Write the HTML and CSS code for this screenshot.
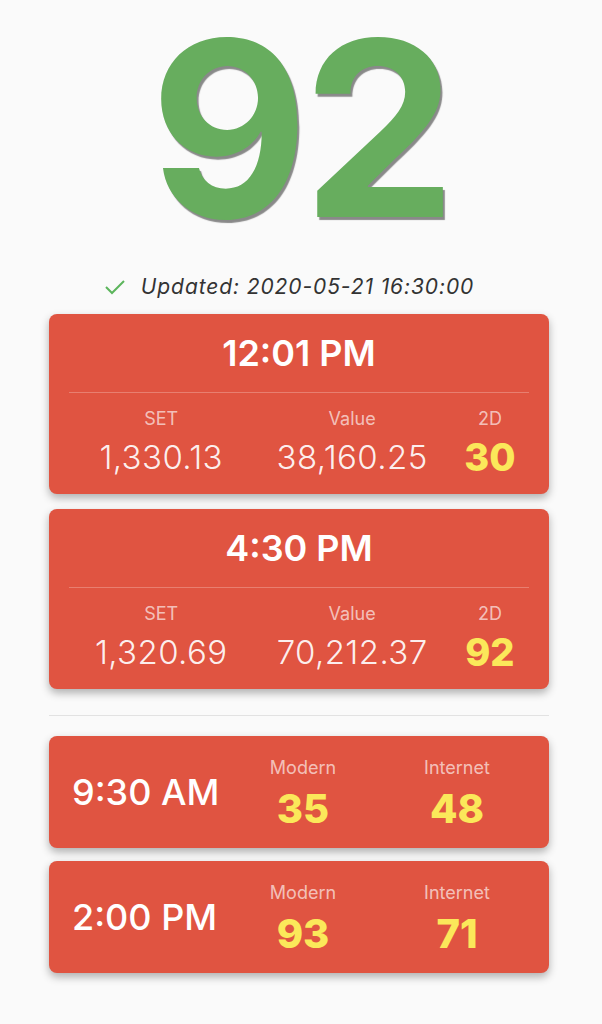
FILE: index.html
```html
<!DOCTYPE html>
<html>
<head>
<meta charset="utf-8">
<link rel="stylesheet" href="styles.css">
</head>
<body>
<main class="page">
  <div class="hero">92</div>
  <div class="updated">
    <svg class="check" width="22" height="18" viewBox="0 0 22 18"><polyline points="2,9 8,15 20,3" fill="none" stroke="#5cb55c" stroke-width="2"/></svg>
    <span class="updated-text">Updated: 2020-05-21 16:30:00</span>
  </div>
  <section class="results">
    <div class="card big">
      <div class="card-title">12:01 PM</div>
      <div class="rule"></div>
      <div class="stats">
        <div class="stat"><div class="label">SET</div><div class="value">1,330.13</div></div>
        <div class="stat"><div class="label">Value</div><div class="value">38,160.25</div></div>
        <div class="stat"><div class="label">2D</div><div class="value hl">30</div></div>
      </div>
    </div>
    <div class="card big">
      <div class="card-title">4:30 PM</div>
      <div class="rule"></div>
      <div class="stats">
        <div class="stat"><div class="label">SET</div><div class="value">1,320.69</div></div>
        <div class="stat"><div class="label">Value</div><div class="value">70,212.37</div></div>
        <div class="stat"><div class="label">2D</div><div class="value hl">92</div></div>
      </div>
    </div>
  </section>
  <div class="separator"></div>
  <section class="results small-list">
    <div class="card small">
      <div class="time">9:30 AM</div>
      <div class="col"><div class="label">Modern</div><div class="num">35</div></div>
      <div class="col"><div class="label">Internet</div><div class="num">48</div></div>
    </div>
    <div class="card small">
      <div class="time">2:00 PM</div>
      <div class="col"><div class="label">Modern</div><div class="num">93</div></div>
      <div class="col"><div class="label">Internet</div><div class="num">71</div></div>
    </div>
  </section>
</main>
</body>
</html>
```
FILE: styles.css
```css
* { box-sizing: border-box; }
html, body { margin: 0; padding: 0; }
body {
  background: #fafafa;
  font-family: Inter, "Noto Sans", sans-serif;
  color: #333;
  width: 602px;
  height: 1024px;
  overflow: hidden;
}
.page { display: flex; flex-direction: column; }
.hero {
  height: 253px;
  padding-top: 7px;
  font-size: 244px;
  line-height: 244px;
  font-weight: 700;
  color: #67ad5e;
  text-align: center;
  letter-spacing: -6px;
  text-indent: -2px;
  text-shadow: 2px 3px 1px rgba(0,0,0,0.45);
}
.updated {
  margin-top: 22px;
  display: flex;
  justify-content: center;
  align-items: center;
  gap: 15px;
  padding-right: 24px;
  height: 24px;
}
.check { display: block; }
.updated-text {
  font-style: italic;
  font-size: 21px;
  line-height: 24px;
  letter-spacing: 0.9px;
  color: #333;
}
.results {
  margin: 15px 0 0 49px;
  width: 500px;
  display: flex;
  flex-direction: column;
  gap: 15px;
}
.card {
  background: #e05441;
  border-radius: 8px;
  box-shadow: 0 4px 8px rgba(0,0,0,0.3);
  color: #fff;
}
.card.big {
  height: 180px;
  padding: 17px 20px 0;
}
.card-title {
  text-align: center;
  font-size: 36px;
  line-height: 44px;
  font-weight: 600;
}
.rule {
  margin-top: 17px;
  height: 1px;
  background: rgba(255,255,255,0.25);
}
.stats {
  margin-top: 15px;
  display: grid;
  grid-template-columns: 184fr 197fr 78fr;
}
.stat { text-align: center; }
.label {
  font-size: 18px;
  line-height: 22px;
  color: rgba(255,255,255,0.65);
}
.value {
  margin-top: 8px;
  font-size: 33px;
  line-height: 38px;
  font-weight: 300;
  letter-spacing: 0.4px;
  color: rgba(255,255,255,0.92);
}
.value.hl {
  font-size: 38px;
  font-weight: 800;
  letter-spacing: 0;
  color: #fbe85a;
}
.separator {
  margin: 26px 0 0 49px;
  width: 500px;
  height: 1px;
  background: #e2e2e2;
}
.small-list { margin-top: 20px; gap: 13px; }
.card.small {
  height: 112px;
  display: flex;
  align-items: center;
  padding: 0 15px 0 23px;
}
.time {
  flex: 1;
  font-size: 36px;
  line-height: 44px;
  font-weight: 500;
}
.col {
  flex: 1;
  text-align: center;
  display: flex;
  flex-direction: column;
  gap: 8px;
  padding-top: 4px;
}
.num {
  font-size: 40px;
  line-height: 44px;
  font-weight: 800;
  color: #fbe85a;
}
```
